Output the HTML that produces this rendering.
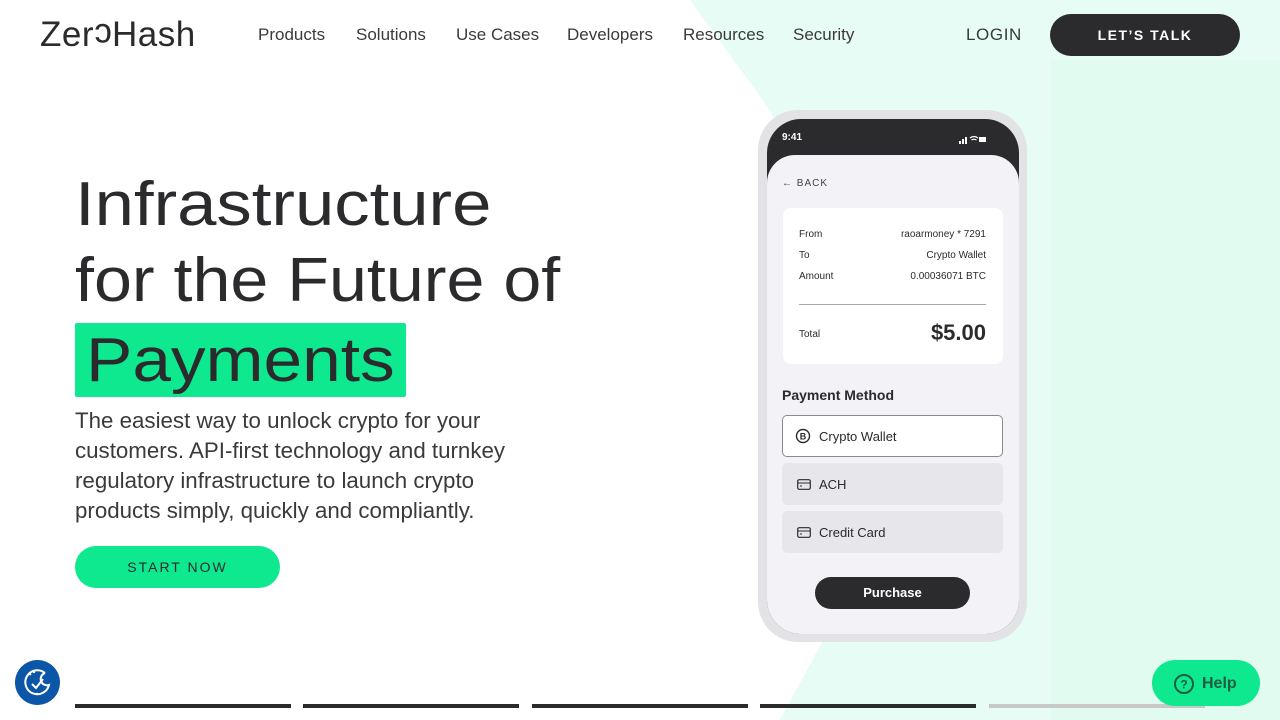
<!DOCTYPE html>
<html><head><meta charset="utf-8"><style>
*{margin:0;padding:0;box-sizing:border-box}
body{width:1280px;height:720px;overflow:hidden;background:#fff;font-family:"Liberation Sans",sans-serif;color:#2b2b2d;position:relative}
.abs{position:absolute}
.nav a{position:absolute;top:25px;font-size:17px;color:#3a3a3c;white-space:nowrap}
h1{position:absolute;left:75px;font-size:62px;font-weight:400;white-space:nowrap;color:#2b2b2d;line-height:1;transform-origin:0 0}
.p{position:absolute;left:75px;top:406px;font-size:22.3px;line-height:30px;color:#3a3a3c;white-space:nowrap}
.bar{position:absolute;top:704px;height:4px;background:#2b2b2d;width:216px}
.row{position:absolute;left:799px;font-size:10px}
</style></head><body>
<svg class="abs" style="left:0;top:0" width="1280" height="720"><polygon points="690,0 1280,0 1280,720 780,720 845,600 900,380 770,110" fill="#e7fcf4"/><rect x="1050" y="60" width="230" height="660" fill="#e2fbf1"/></svg>

<div class="abs" style="left:40px;top:15px;font-size:35px;letter-spacing:0.5px;color:#2b2b2d">Zer<span style="display:inline-block;transform:rotate(180deg)">c</span>Hash</div>
<div class="nav">
<a style="left:258px">Products</a><a style="left:356px">Solutions</a><a style="left:456px">Use Cases</a><a style="left:567px">Developers</a><a style="left:683px">Resources</a><a style="left:793px">Security</a>
<a style="left:966px;letter-spacing:0.6px">LOGIN</a>
</div>
<div class="abs" style="left:1050px;top:14px;width:190px;height:42px;border-radius:21px;background:#2b2b2d;color:#fff;font-weight:700;font-size:14px;letter-spacing:1.5px;text-align:center;line-height:42px">LET’S TALK</div>

<h1 style="top:174px;transform:scaleX(1.14)">Infrastructure</h1>
<h1 style="top:250px;transform:scaleX(1.1)">for the Future of</h1>
<div class="abs" style="left:75px;top:323px;width:331px;height:74px;background:#0ee98f;border-radius:2px"></div>
<h1 style="top:330px;left:86px;transform:scaleX(1.12)">Payments</h1>
<div class="p">The easiest way to unlock crypto for your<br>customers. API-first technology and turnkey<br>regulatory infrastructure to launch crypto<br>products simply, quickly and compliantly.</div>
<div class="abs" style="left:75px;top:546px;width:205px;height:42px;border-radius:21px;background:#0ee98f;font-size:14px;letter-spacing:2px;text-align:center;line-height:42px;color:#2b2b2d">START NOW</div>

<!-- phone -->
<div class="abs" style="left:758px;top:110px;width:269px;height:532px;border-radius:40px;background:#e3e3e6"></div>
<div class="abs" style="left:767px;top:119px;width:252px;height:515px;border-radius:34px;background:#2b2b2d;overflow:hidden">
 <div class="abs" style="left:0;top:36px;width:252px;height:500px;border-radius:28px 28px 0 0;background:#f2f2f7"></div>
</div>
<div class="abs" style="left:782px;top:132px;font-size:10px;font-weight:700;color:#fff">9:41</div>
<svg class="abs" style="left:959px;top:135px" width="28" height="9"><rect x="0" y="6" width="2" height="3" fill="#fff"/><rect x="3" y="4" width="2" height="5" fill="#fff"/><rect x="6" y="2" width="2" height="7" fill="#fff"/><path d="M11 3 Q15 0 19 3 M12.5 5 Q15 3.5 17.5 5" stroke="#fff" fill="none" stroke-width="1.2"/><rect x="20" y="2" width="7" height="5" fill="#fff"/></svg>
<div class="abs" style="left:782px;top:178px;font-size:10px;letter-spacing:1px;color:#444">← BACK</div>
<div class="abs" style="left:783px;top:208px;width:220px;height:156px;border-radius:8px;background:#fff"></div>
<div class="row" style="top:229px">From</div><div class="abs" style="right:294px;top:229px;font-size:10px">raoarmoney * 7291</div>
<div class="row" style="top:250px">To</div><div class="abs" style="right:294px;top:250px;font-size:10px">Crypto Wallet</div>
<div class="row" style="top:271px">Amount</div><div class="abs" style="right:294px;top:271px;font-size:10px">0.00036071 BTC</div>
<div class="abs" style="left:799px;top:304px;width:187px;height:1px;background:#aaa"></div>
<div class="row" style="top:329px">Total</div><div class="abs" style="right:294px;top:320px;font-size:22px;font-weight:700">$5.00</div>
<div class="abs" style="left:782px;top:387px;font-size:14px;font-weight:700">Payment Method</div>
<div class="abs" style="left:782px;top:415px;width:221px;height:42px;border-radius:5px;background:#fff;border:1px solid #8a8a8e"></div>
<svg class="abs" style="left:795px;top:428px" width="16" height="16"><circle cx="8" cy="8" r="6.5" stroke="#2b2b2d" fill="none" stroke-width="1.4"/><text x="8" y="11.5" font-size="9" font-weight="bold" text-anchor="middle" fill="#2b2b2d" font-family="Liberation Sans">B</text></svg>
<div class="abs" style="left:819px;top:429px;font-size:13px">Crypto Wallet</div>
<div class="abs" style="left:782px;top:463px;width:221px;height:42px;border-radius:5px;background:#e6e6eb"></div>
<div class="abs" style="left:782px;top:511px;width:221px;height:42px;border-radius:5px;background:#e6e6eb"></div>
<svg class="abs" style="left:797px;top:479px" width="14" height="11"><rect x="0.7" y="0.7" width="12.6" height="9.6" rx="1.5" stroke="#2b2b2d" fill="none" stroke-width="1.2"/><line x1="1" y1="4" x2="13" y2="4" stroke="#2b2b2d"/><line x1="3" y1="7" x2="5" y2="7" stroke="#2b2b2d"/></svg>
<div class="abs" style="left:819px;top:477px;font-size:13px">ACH</div>
<svg class="abs" style="left:797px;top:527px" width="14" height="11"><rect x="0.7" y="0.7" width="12.6" height="9.6" rx="1.5" stroke="#2b2b2d" fill="none" stroke-width="1.2"/><line x1="1" y1="4" x2="13" y2="4" stroke="#2b2b2d"/><line x1="3" y1="7" x2="5" y2="7" stroke="#2b2b2d"/></svg>
<div class="abs" style="left:819px;top:525px;font-size:13px">Credit Card</div>
<div class="abs" style="left:815px;top:577px;width:155px;height:32px;border-radius:16px;background:#2b2b2d;color:#fff;font-size:13px;font-weight:700;text-align:center;line-height:32px">Purchase</div>

<!-- bars -->
<div class="bar" style="left:75px"></div><div class="bar" style="left:303px"></div><div class="bar" style="left:532px"></div><div class="bar" style="left:760px"></div><div class="bar" style="left:989px;background:#c8c8c8"></div>

<!-- cookie -->
<div class="abs" style="left:15px;top:660px;width:45px;height:45px;border-radius:50%;background:#0b56a6"></div>
<svg class="abs" style="left:15px;top:660px" width="45" height="45"><path d="M30 13 A12 12 0 1 0 34 25 A5 5 0 0 1 30 13" stroke="#fff" fill="none" stroke-width="2"/><path d="M17 24 L21 28 L28 19" stroke="#fff" fill="none" stroke-width="2"/><circle cx="15" cy="14" r="1.3" fill="#fff"/><circle cx="19" cy="12" r="1.2" fill="#fff"/><circle cx="22" cy="34" r="1.2" fill="#fff"/></svg>

<!-- help -->
<div class="abs" style="left:1152px;top:660px;width:108px;height:46px;border-radius:23px;background:#0ee98f"></div>
<svg class="abs" style="left:1173px;top:673px" width="22" height="22"><circle cx="11" cy="11" r="9" stroke="#1e5c43" fill="none" stroke-width="2"/><text x="11" y="15.5" font-size="12" font-weight="bold" text-anchor="middle" fill="#1e5c43" font-family="Liberation Sans">?</text></svg>
<div class="abs" style="left:1202px;top:675px;font-size:16px;font-weight:700;color:#1e5c43">Help</div>
</body></html>
